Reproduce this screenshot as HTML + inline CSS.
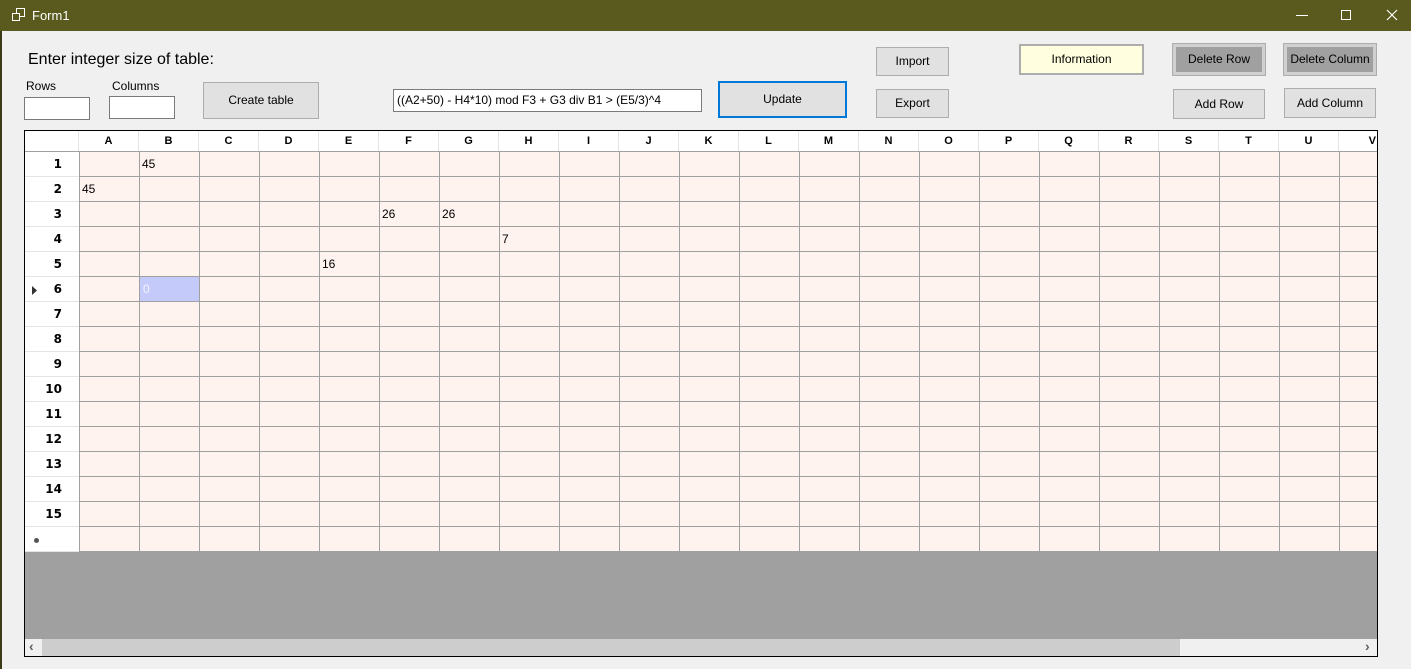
<!DOCTYPE html>
<html><head><meta charset="utf-8"><style>
*{margin:0;padding:0;box-sizing:border-box}
body{width:1411px;height:669px;background:#f0f0f0;font-family:"Liberation Sans",sans-serif;font-size:12px;position:relative;overflow:hidden;color:#000}
.a{position:absolute}
.title{left:0;top:0;width:1411px;height:31px;background:#5a5a1e}
.btn{position:absolute;background:#e1e1e1;border:1px solid #adadad;text-align:center;font-size:12px}
.tb{position:absolute;background:#fff;border:1px solid #7a7a7a}
.grid{left:24px;top:130px;width:1354px;height:527px;border:1px solid #000;background:#a0a0a0;overflow:hidden}
.cells{left:54px;top:20px;width:1300px;height:401px;background-color:#fff3ef;
background-image:linear-gradient(to right,#a0a0a0 1px,transparent 1px),linear-gradient(to bottom,#a0a0a0 1px,transparent 1px);
background-size:60px 25px;}
.ch{top:0;height:20px;background:#fff;font-weight:bold;font-size:11px;text-align:center;line-height:20px;border-right:1px solid #e4e4e4}
.rh{left:0;width:54px;height:25px;background:#fff;border-bottom:1px solid #e4e4e4;font-weight:bold;font-size:12px;text-align:right;padding-right:17px;line-height:25px;font-family:"DejaVu Sans",sans-serif}
.v{font-size:12px;line-height:25px;padding-left:3px}
</style></head><body>
<div class="a title"></div>
<div class="a" style="left:0;top:31px;width:2px;height:638px;background:#3a3a14"></div>
<svg class="a" style="left:11px;top:8px" width="15" height="14" viewBox="0 0 15 14"><rect x="5.5" y="0.5" width="8" height="8" fill="none" stroke="#fff"/><rect x="1.5" y="5.5" width="7" height="7" fill="#5a5a1e" stroke="#fff"/></svg>
<div class="a" style="left:32px;top:8px;color:#fff;font-size:13px">Form1</div>
<div class="a" style="left:1296px;top:15px;width:12px;height:1px;background:#fff"></div>
<div class="a" style="left:1341px;top:10px;width:10px;height:10px;border:1px solid #fff"></div>
<svg class="a" style="left:1386px;top:9px" width="12" height="12"><path d="M1 1L11 11M11 1L1 11" stroke="#fff" stroke-width="1.2"/></svg>

<div class="a" style="left:28px;top:51px;font-size:16px">Enter integer size of table:</div>
<div class="a" style="left:26px;top:79px;font-size:12px">Rows</div>
<div class="a" style="left:112px;top:79px;font-size:12px">Columns</div>
<div class="tb" style="left:24px;top:97px;width:66px;height:23px"></div>
<div class="tb" style="left:109px;top:96px;width:66px;height:23px"></div>
<div class="btn" style="left:203px;top:82px;width:116px;height:37px;line-height:35px">Create table</div>
<div class="tb" style="left:393px;top:89px;width:309px;height:23px;line-height:20px;padding-left:3px">((A2+50) - H4*10) mod F3 + G3 div B1 &gt; (E5/3)^4</div>
<div class="btn" style="left:718px;top:81px;width:129px;height:37px;line-height:33px;border:2px solid #0078d7">Update</div>
<div class="btn" style="left:876px;top:47px;width:73px;height:29px;line-height:27px">Import</div>
<div class="btn" style="left:876px;top:89px;width:73px;height:29px;line-height:27px">Export</div>
<div class="btn" style="left:1019px;top:44px;width:125px;height:31px;line-height:27px;background:#ffffe0;border:2px solid #adadad">Information</div>
<div class="btn" style="left:1173px;top:44px;width:92px;height:31px;line-height:25px;background:#a0a0a0;border:3px solid #d0d0d0;outline:1px solid #adadad">Delete Row</div>
<div class="btn" style="left:1284px;top:44px;width:92px;height:31px;line-height:25px;background:#a0a0a0;border:3px solid #d0d0d0;outline:1px solid #adadad">Delete Column</div>
<div class="btn" style="left:1173px;top:89px;width:92px;height:30px;line-height:28px">Add Row</div>
<div class="btn" style="left:1284px;top:88px;width:92px;height:30px;line-height:28px">Add Column</div>

<div class="a grid">
 <div class="a" style="left:0;top:0;width:1352px;height:20px;background:#fff"></div>
 <div class="a cells"></div>
 <div class="a" style="left:54px;top:420px;width:1300px;height:1px;background:#a0a0a0"></div>
 <div class="a ch" style="left:0;width:54px"></div>
 <div class="a ch" style="left:54px;width:60px">A</div><div class="a ch" style="left:114px;width:60px">B</div><div class="a ch" style="left:174px;width:60px">C</div><div class="a ch" style="left:234px;width:60px">D</div><div class="a ch" style="left:294px;width:60px">E</div><div class="a ch" style="left:354px;width:60px">F</div><div class="a ch" style="left:414px;width:60px">G</div><div class="a ch" style="left:474px;width:60px">H</div><div class="a ch" style="left:534px;width:60px">I</div><div class="a ch" style="left:594px;width:60px">J</div><div class="a ch" style="left:654px;width:60px">K</div><div class="a ch" style="left:714px;width:60px">L</div><div class="a ch" style="left:774px;width:60px">M</div><div class="a ch" style="left:834px;width:60px">N</div><div class="a ch" style="left:894px;width:60px">O</div><div class="a ch" style="left:954px;width:60px">P</div><div class="a ch" style="left:1014px;width:60px">Q</div><div class="a ch" style="left:1074px;width:60px">R</div><div class="a ch" style="left:1134px;width:60px">S</div><div class="a ch" style="left:1194px;width:60px">T</div><div class="a ch" style="left:1254px;width:60px">U</div><div class="a ch" style="left:1314px;width:60px;text-align:right;padding-right:22px">V</div>
 <div class="a rh" style="top:21px">1</div><div class="a rh" style="top:46px">2</div><div class="a rh" style="top:71px">3</div><div class="a rh" style="top:96px">4</div><div class="a rh" style="top:121px">5</div><div class="a rh" style="top:146px">6</div><div class="a rh" style="top:171px">7</div><div class="a rh" style="top:196px">8</div><div class="a rh" style="top:221px">9</div><div class="a rh" style="top:246px">10</div><div class="a rh" style="top:271px">11</div><div class="a rh" style="top:296px">12</div><div class="a rh" style="top:321px">13</div><div class="a rh" style="top:346px">14</div><div class="a rh" style="top:371px">15</div><div class="a rh" style="top:396px"></div>
 <svg class="a" style="left:7px;top:155px" width="6" height="9"><path d="M0 0L5 4.5L0 9Z" fill="#333"/></svg>
 <div class="a" style="left:9px;top:407px;width:5px;height:5px;border-radius:50%;background:#555"></div>
 <div class="a v" style="left:114px;top:21px">45</div>
 <div class="a v" style="left:54px;top:46px">45</div>
 <div class="a v" style="left:354px;top:71px">26</div>
 <div class="a v" style="left:414px;top:71px">26</div>
 <div class="a v" style="left:474px;top:96px">7</div>
 <div class="a v" style="left:294px;top:121px">16</div>
 <div class="a v" style="left:115px;top:146px;width:59px;height:24px;background:#c4cbfa;color:#f4f4ff;line-height:24px">0</div>
 <div class="a" style="left:0;top:508px;width:1352px;height:17px;background:#f0f0f0"></div>
 <div class="a" style="left:17px;top:508px;width:1138px;height:17px;background:#cdcdcd"></div>
 <div class="a" style="left:4px;top:507px;font-size:14px;color:#606060;line-height:17px;font-weight:bold">&lsaquo;</div>
 <div class="a" style="left:1340px;top:507px;font-size:14px;color:#606060;line-height:17px;font-weight:bold">&rsaquo;</div>
</div>
</body></html>
